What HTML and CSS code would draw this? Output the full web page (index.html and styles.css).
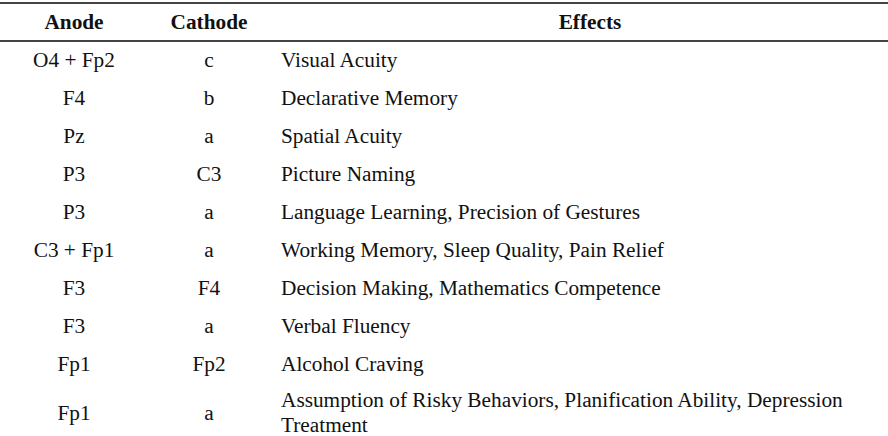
FILE: index.html
```html
<!DOCTYPE html>
<html>
<head>
<meta charset="utf-8">
<link rel="stylesheet" href="styles.css">
</head>
<body>
<table class="tbl">
<colgroup><col class="c-anode"><col class="c-cath"><col class="c-eff"></colgroup>
<thead>
<tr><th>Anode</th><th>Cathode</th><th>Effects</th></tr>
</thead>
<tbody>
<tr><td>O4 + Fp2</td><td>c</td><td class="eff">Visual Acuity</td></tr>
<tr><td>F4</td><td>b</td><td class="eff">Declarative Memory</td></tr>
<tr><td>Pz</td><td>a</td><td class="eff">Spatial Acuity</td></tr>
<tr><td>P3</td><td>C3</td><td class="eff">Picture Naming</td></tr>
<tr><td>P3</td><td>a</td><td class="eff">Language Learning, Precision of Gestures</td></tr>
<tr><td>C3 + Fp1</td><td>a</td><td class="eff">Working Memory, Sleep Quality, Pain Relief</td></tr>
<tr><td>F3</td><td>F4</td><td class="eff">Decision Making, Mathematics Competence</td></tr>
<tr><td>F3</td><td>a</td><td class="eff">Verbal Fluency</td></tr>
<tr><td>Fp1</td><td>Fp2</td><td class="eff">Alcohol Craving</td></tr>
<tr class="last"><td>Fp1</td><td>a</td><td class="eff">Assumption of Risky Behaviors, Planification Ability, Depression Treatment</td></tr>
</tbody>
</table>
</body>
</html>
```
FILE: styles.css
```css
html, body {
  margin: 0;
  padding: 0;
  background: #fff;
  overflow: hidden;
}
body {
  padding-top: 2px;
  font-family: "Liberation Serif", "Times New Roman", serif;
  color: #111;
  font-size: 21.3px;
}
.tbl {
  width: 910px;
  border-collapse: collapse;
  table-layout: fixed;
}
.c-anode { width: 148px; }
.c-cath { width: 122px; }
.c-eff { width: 640px; }
.tbl th {
  font-weight: bold;
  text-align: center;
  height: 36px;
  padding: 0;
  border-top: 2px solid #444;
  border-bottom: 2px solid #444;
  vertical-align: middle;
}
.tbl td {
  text-align: center;
  height: 37.9px;
  padding: 0;
  vertical-align: middle;
  line-height: 25px;
}
.tbl td.eff {
  text-align: left;
  padding-left: 11px;
  padding-right: 18px;
}
.tbl tr.last td {
  height: 60px;
}
```
